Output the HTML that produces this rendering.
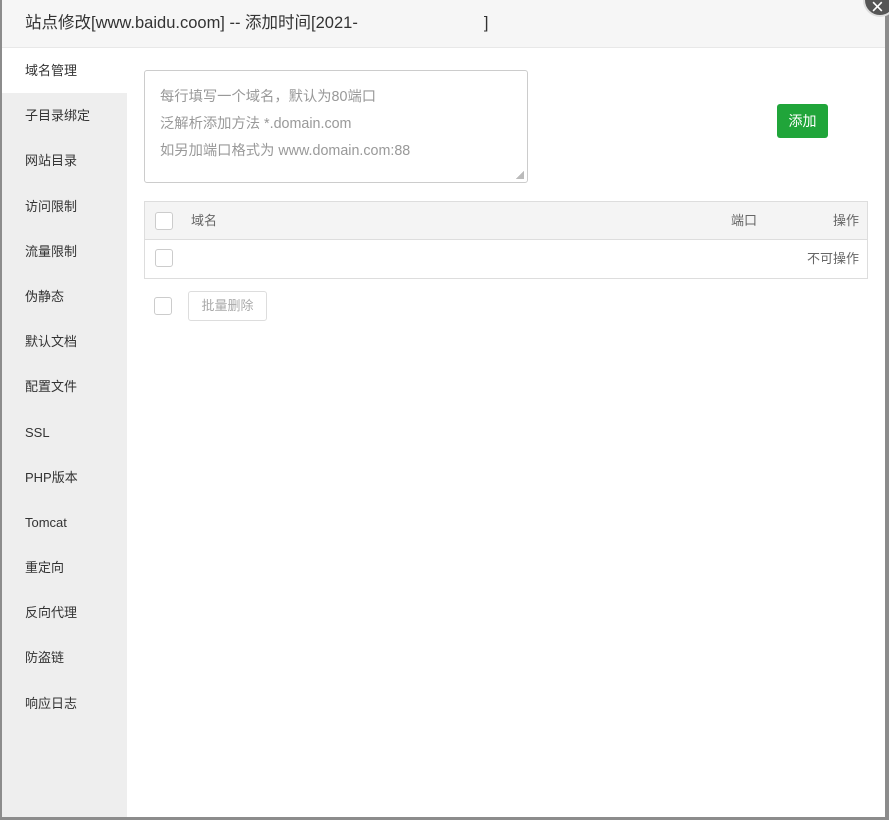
<!DOCTYPE html>
<html><head><meta charset="utf-8"><style>
*{margin:0;padding:0;box-sizing:border-box}
body{width:889px;height:820px;background:#8c8c8c;font-family:"Liberation Sans","Noto Sans CJK SC",sans-serif;position:relative;overflow:hidden}
.dlg{position:absolute;left:2px;top:0;width:883px;height:817px;background:#fff}
.hd{height:48px;background:#f6f6f6;border-bottom:1px solid #e8e8e8;font-size:16.5px;color:#333;padding-left:23px;line-height:46px}
.side{position:absolute;left:0;top:48px;width:125px;bottom:0;background:#eee}
.side div{height:45.2px;line-height:45px;padding-left:23px;font-size:13px;color:#333}
.side .on{background:#fff}
.ta{position:absolute;left:142px;top:70px;width:384px;height:113px;border:1px solid #ccc;border-radius:3px;padding:13px 15px;font-size:14.3px;color:#999;line-height:27px}
.ta i{position:absolute;right:3px;bottom:3px;width:8px;height:8px;background:linear-gradient(135deg,transparent 50%,#bbb 50%)}
.btn{position:absolute;left:775px;top:104px;width:51px;height:34px;background:#20a53a;border-radius:3px;color:#fff;font-size:14px;text-align:center;line-height:34px}
.tb{position:absolute;left:142px;top:201px;width:724px;height:78px;border:1px solid #ddd}
.th{height:38px;background:#f4f4f4;border-bottom:1px solid #ddd;position:relative;font-size:13px;color:#666}
.tr{height:38px;position:relative;font-size:13px;color:#666}
.cb{position:absolute;width:18px;height:18px;border:1px solid #ccc;border-radius:3px;background:#fff}
.t{position:absolute;line-height:38px}
.bd{position:absolute;left:186px;top:291px;width:79px;height:30px;border:1px solid #ddd;border-radius:3px;font-size:13px;color:#aaa;text-align:center;line-height:28px}
.x{position:absolute;left:863px;top:-17px;width:34px;height:34px;border-radius:50%;background:#555;border:2px solid #ddd;color:#fff;font-size:22px;line-height:44px;text-indent:6px}
</style></head><body>
<div class="dlg">
<div class="hd">站点修改[www.baidu.coom] -- 添加时间[2021-<span style="display:inline-block;width:126px"></span>]</div>
<div class="side">
<div class="on">域名管理</div><div>子目录绑定</div><div>网站目录</div><div>访问限制</div><div>流量限制</div><div>伪静态</div><div>默认文档</div><div>配置文件</div><div>SSL</div><div>PHP版本</div><div>Tomcat</div><div>重定向</div><div>反向代理</div><div>防盗链</div><div>响应日志</div>
</div>
<div class="ta">每行填写一个域名，默认为80端口<br>泛解析添加方法 *.domain.com<br>如另加端口格式为 www.domain.com:88<i></i></div>
<div class="btn">添加</div>
<div class="tb">
<div class="th"><div class="cb" style="left:10px;top:10px"></div><div class="t" style="left:46px">域名</div><div class="t" style="left:586px">端口</div><div class="t" style="right:8px">操作</div></div>
<div class="tr"><div class="cb" style="left:10px;top:9px"></div><div class="t" style="right:8px">不可操作</div></div>
</div>
<div class="cb" style="left:152px;top:297px"></div>
<div class="bd">批量删除</div>
</div>
<div class="x">×</div>
</body></html>
